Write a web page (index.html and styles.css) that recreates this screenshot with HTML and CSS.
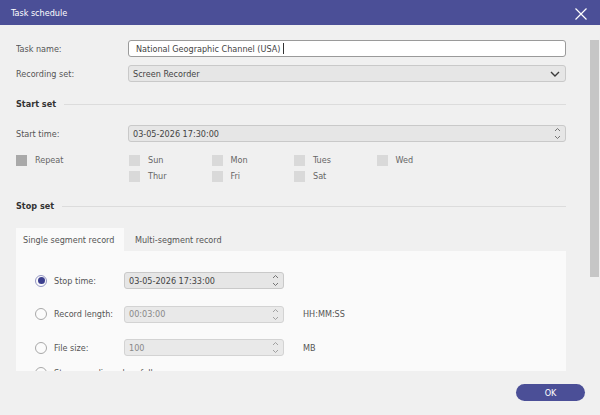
FILE: index.html
```html
<!DOCTYPE html>
<html>
<head>
<meta charset="utf-8">
<link rel="stylesheet" href="styles.css">
</head>
<body>
<div class="dialog">
  <header class="titlebar">
    <span class="title">Task schedule</span>
    <span class="close">
      <svg width="12" height="12" viewBox="0 0 12 12"><path d="M0.5 0.5 L11.5 11.5 M11.5 0.5 L0.5 11.5" stroke="#fff" stroke-width="1.2" fill="none"/></svg>
    </span>
  </header>
  <div class="main">
    <div class="content">
      <div class="row">
        <span class="lbl">Task name:</span>
        <div class="field field-text">National Geographic Channel (USA)<span class="caret"></span></div>
      </div>
      <div class="row row2">
        <span class="lbl">Recording set:</span>
        <div class="field field-gray">Screen Recorder
          <svg class="chev" width="10" height="6" viewBox="0 0 10 6"><path d="M1 1 L5 5 L9 1" stroke="#3a3a3a" stroke-width="1.4" fill="none"/></svg>
        </div>
      </div>
      <div class="heading h-start">Start set</div>
      <div class="row row-start">
        <span class="lbl">Start time:</span>
        <div class="field field-gray">03-05-2026 17:30:00
          <svg class="spin" width="7" height="13" viewBox="0 0 7 13"><path d="M1 4 L3.5 1.5 L6 4 M1 9 L3.5 11.5 L6 9" stroke="#666" stroke-width="0.9" fill="none"/></svg>
        </div>
      </div>
      <div class="repeat">
        <div class="check-item repeat-item"><span class="box box-dark"></span><span>Repeat</span></div>
        <div class="days">
          <div class="check-item"><span class="box"></span><span>Sun</span></div>
          <div class="check-item"><span class="box"></span><span>Mon</span></div>
          <div class="check-item"><span class="box"></span><span>Tues</span></div>
          <div class="check-item"><span class="box"></span><span>Wed</span></div>
          <div class="check-item"><span class="box"></span><span>Thur</span></div>
          <div class="check-item"><span class="box"></span><span>Fri</span></div>
          <div class="check-item"><span class="box"></span><span>Sat</span></div>
        </div>
      </div>
      <div class="heading h-stop">Stop set</div>
      <div class="tabs">
        <div class="tab active">Single segment record</div>
        <div class="tab">Multi-segment record</div>
      </div>
      <div class="panel">
        <div class="prow">
          <span class="radio checked"></span>
          <span class="plbl">Stop time:</span>
          <div class="field field-gray pfield">03-05-2026 17:33:00
            <svg class="spin" width="7" height="13" viewBox="0 0 7 13"><path d="M1 4 L3.5 1.5 L6 4 M1 9 L3.5 11.5 L6 9" stroke="#666" stroke-width="0.9" fill="none"/></svg>
          </div>
        </div>
        <div class="prow">
          <span class="radio"></span>
          <span class="plbl">Record length:</span>
          <div class="field field-dis pfield">00:03:00
            <svg class="spin" width="7" height="13" viewBox="0 0 7 13"><path d="M1 4 L3.5 1.5 L6 4 M1 9 L3.5 11.5 L6 9" stroke="#999" stroke-width="0.9" fill="none"/></svg>
          </div>
          <span class="unit">HH:MM:SS</span>
        </div>
        <div class="prow">
          <span class="radio"></span>
          <span class="plbl">File size:</span>
          <div class="field field-dis pfield">100
            <svg class="spin" width="7" height="13" viewBox="0 0 7 13"><path d="M1 4 L3.5 1.5 L6 4 M1 9 L3.5 11.5 L6 9" stroke="#999" stroke-width="0.9" fill="none"/></svg>
          </div>
          <span class="unit">MB</span>
        </div>
        <div class="prow prow-last">
          <span class="radio"></span>
          <span class="plbl">Stop recording when full</span>
        </div>
      </div>
    </div>
    <div class="scrollbar"><div class="thumb"></div></div>
  </div>
  <footer class="footer">
    <button class="ok">OK</button>
  </footer>
</div>
</body>
</html>
```
FILE: styles.css
```css
* { box-sizing: border-box; }
html, body { margin: 0; padding: 0; }
body {
  width: 600px;
  height: 415px;
  overflow: hidden;
  background: #f0f0f0;
  font-family: "DejaVu Sans Condensed", "Liberation Sans", Arial, sans-serif;
  font-size: 9px;
  color: #555;
}
.dialog {
  display: flex;
  flex-direction: column;
  height: 415px;
}
.titlebar {
  height: 25px;
  flex: none;
  background: #4b4f97;
  color: #fff;
  display: flex;
  align-items: center;
  justify-content: space-between;
  padding: 0 13px 0 11px;
}
.title { font-size: 9px; }
.close { display: flex; margin-top: 2px; }
.main {
  height: 346px;
  flex: none;
  display: flex;
  overflow: hidden;
}
.content {
  width: 550px;
  margin-left: 16px;
  padding-top: 15px;
  overflow: hidden;
}
.row {
  display: flex;
  align-items: center;
  height: 17px;
}
.row2 { margin-top: 8px; }
.row-start { margin-top: 14px; }
.lbl { width: 112px; flex: none; }
.field {
  flex: 1;
  height: 17px;
  border-radius: 3px;
  display: flex;
  align-items: center;
  color: #444;
}
.field-text {
  background: #fff;
  border: 1px solid #9a9a9a;
  padding-left: 7px;
}
.caret {
  width: 1px;
  height: 11px;
  background: #333;
  margin-left: 3px;
}
.field-gray {
  background: #e6e6e6;
  border: 1px solid #c9c9c9;
  padding-left: 4px;
  justify-content: space-between;
  padding-right: 4px;
}
.field-dis {
  background: #e9e9e9;
  border: 1px solid #d3d3d3;
  padding-left: 4px;
  justify-content: space-between;
  padding-right: 4px;
  color: #888;
}
.chev { margin-right: 1px; }
.heading {
  display: flex;
  align-items: center;
  height: 14px;
  font-weight: bold;
  color: #333;
}
.heading::after {
  content: "";
  flex: 1;
  height: 1px;
  background: #dcdcdc;
  margin-left: 8px;
}
.h-start { margin-top: 15px; }
.h-stop { margin-top: 17px; }
.repeat {
  display: flex;
  margin-top: 13px;
}
.repeat-item { width: 113px; flex: none; }
.days {
  display: grid;
  grid-template-columns: repeat(4, 82.5px);
  row-gap: 5px;
}
.check-item {
  display: flex;
  align-items: center;
  height: 11px;
  line-height: 11px;
  color: #666;
}
.box {
  width: 11px;
  height: 11px;
  background: #d9d9d9;
  margin-right: 8px;
  flex: none;
}
.box-dark { background: #a9a9a9; }
.tabs {
  display: flex;
  margin-top: 15px;
  height: 23px;
}
.tab {
  display: flex;
  align-items: center;
  padding-left: 11px;
  color: #555;
}
.tab.active {
  width: 108px;
  padding-left: 7px;
  background: #fafafa;
}
.panel {
  background: #fafafa;
  padding-top: 21px;
  padding-bottom: 20px;
  display: flex;
  flex-direction: column;
  gap: 16.5px;
}
.prow {
  display: flex;
  align-items: center;
  height: 17px;
}
.prow-last { margin-top: -8px; }
.radio {
  width: 12px;
  height: 12px;
  border-radius: 50%;
  border: 1px solid #a8a8a8;
  background: #fbfbfb;
  margin-left: 19px;
  margin-right: 7px;
  flex: none;
  display: flex;
  align-items: center;
  justify-content: center;
}
.radio.checked { border-color: #9597c4; }
.radio.checked::after {
  content: "";
  width: 7px;
  height: 7px;
  border-radius: 50%;
  background: #3c3f8e;
}
.plbl { width: 70px; flex: none; white-space: nowrap; }
.pfield { flex: none; width: 160px; }
.unit { margin-left: 19px; color: #555; }
.scrollbar {
  width: 9px;
  margin-left: 24px;
  padding-top: 15px;
}
.thumb {
  width: 9px;
  height: 237px;
  background: #c6c6c6;
}
.footer {
  height: 44px;
  flex: none;
  display: flex;
  justify-content: flex-end;
  align-items: flex-start;
  padding: 13px 15px 0 0;
  background: #f0f0f0;
}
.ok {
  width: 69px;
  height: 17px;
  border: none;
  border-radius: 9px;
  background: #4b4f97;
  color: #fff;
  font-family: "DejaVu Sans Condensed", "Liberation Sans", Arial, sans-serif;
  font-size: 9px;
  padding: 0;
}
```
